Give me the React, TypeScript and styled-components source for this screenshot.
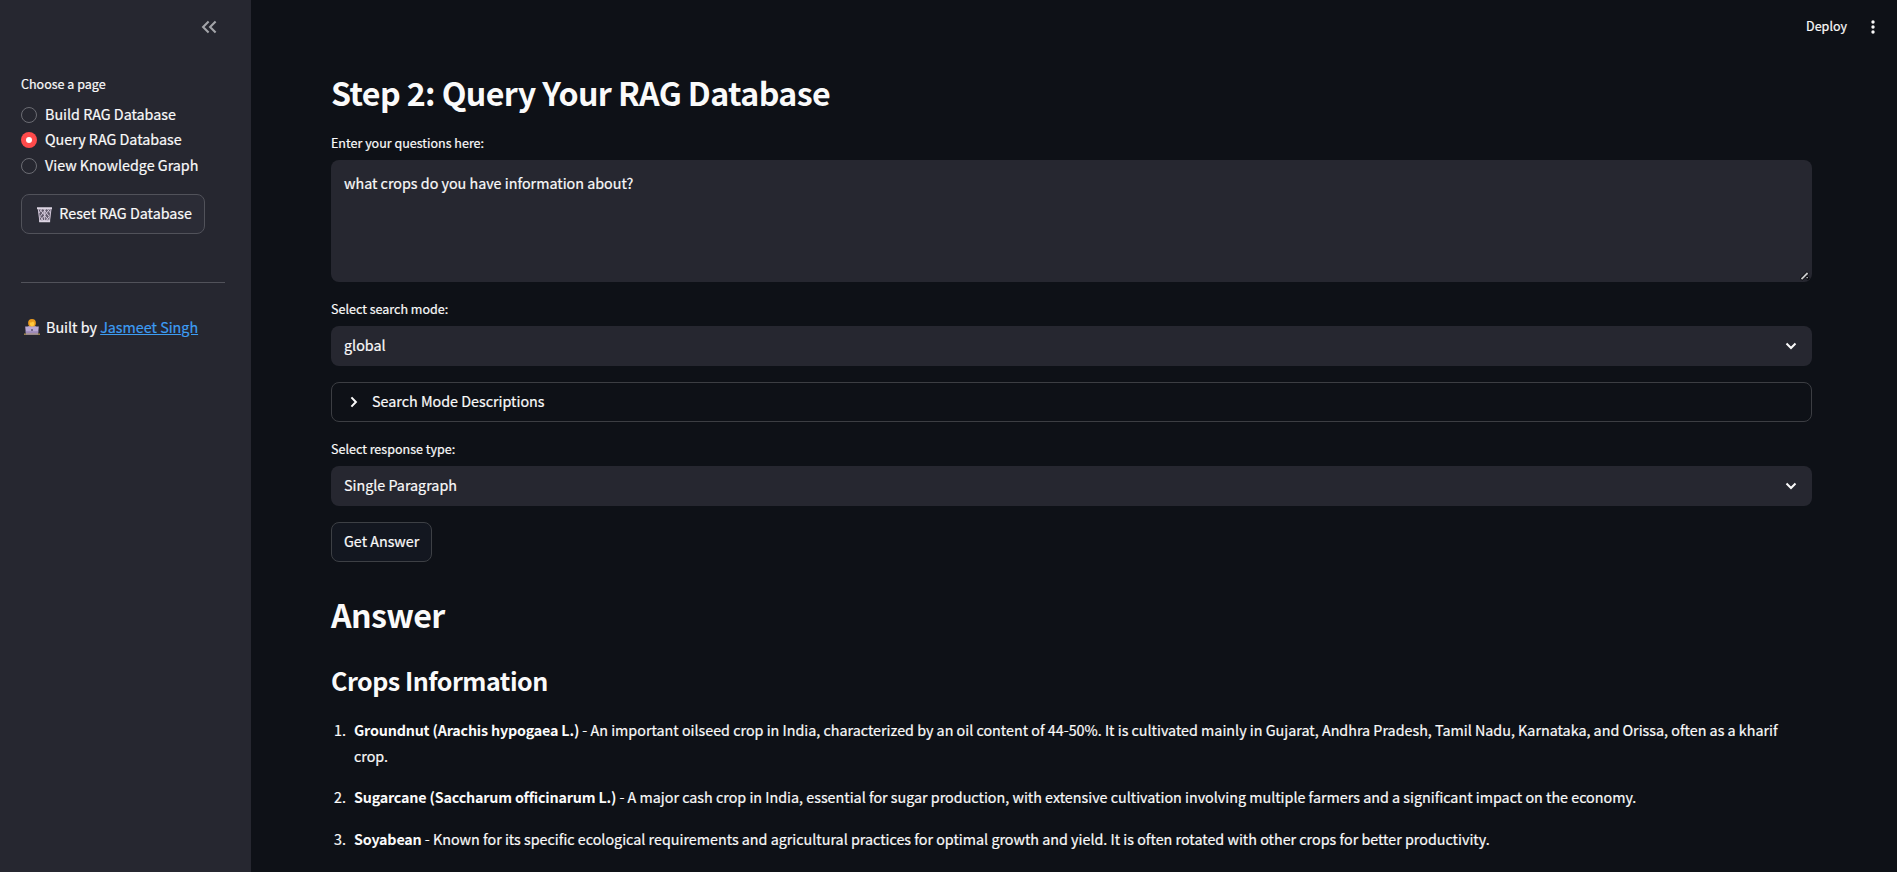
import React from "react";
import styled, { createGlobalStyle, css } from "styled-components";

const GlobalStyle = createGlobalStyle`
  * { box-sizing: border-box; }
  body {
    margin: 0;
    background: #0e1117;
    color: #fafafa;
    font-family: "Noto Sans CJK SC", "Noto Sans", sans-serif;
    font-size: 14.32px;
    line-height: 25.6px;
    -webkit-text-stroke: 0.2px currentColor;
    overflow: hidden;
  }
`;

const field = css`
  width: 100%;
  border: 0;
  border-radius: 8px;
  background: #262730;
`;

const Layout = styled.div`
  display: flex;
  height: 872px;
  overflow: hidden;
`;

const Sidebar = styled.aside`
  flex: 0 0 251px;
  padding: 0 26px 0 21px;
  background: #262730;
`;

const SidebarHeader = styled.div`
  display: flex;
  justify-content: flex-end;
  align-items: center;
  height: 54px;
  padding-right: 6px;
  color: #a3a4a9;
`;

const Label = styled.label<{ $top?: number; $bottom?: number }>`
  display: block;
  height: 20px;
  margin: ${(p) => p.$top ?? 0}px 0 ${(p) => p.$bottom ?? 7}px;
  font-size: 12.53px;
  line-height: 20px;
`;

const Caption = styled.span`
  padding-bottom: 2px;
`;

const RadioRow = styled.div`
  display: flex;
  align-items: center;
  gap: 8px;
  height: 25.5px;
`;

const RadioDot = styled.span<{ $checked?: boolean }>`
  display: flex;
  align-items: center;
  justify-content: center;
  width: 16px;
  height: 16px;
  border-radius: 50%;
  border: ${(p) => (p.$checked ? "0" : "1px solid #6b6c73")};
  background: ${(p) => (p.$checked ? "#ff4b4b" : "transparent")};
  &::after {
    content: "";
    display: ${(p) => (p.$checked ? "block" : "none")};
    width: 6px;
    height: 6px;
    border-radius: 50%;
    background: #fff;
  }
`;

const Button = styled.button<{ $raised?: boolean }>`
  display: flex;
  align-items: center;
  height: 40px;
  padding: 0 12px;
  border: 1px solid ${(p) => (p.$raised ? "#51525a" : "#3d4045")};
  border-radius: 8px;
  background: ${(p) => (p.$raised ? "#2b2c36" : "#131720")};
  color: inherit;
  font: inherit;
  white-space: nowrap;
`;

const ResetButton = styled(Button)`
  width: 184px;
  margin-top: 15.5px;
  padding-left: 15px;
  gap: 7px;
`;

const Divider = styled.hr`
  height: 1px;
  margin: 48px 0 31px;
  border: 0;
  background: #51525a;
`;

const Credit = styled.p`
  display: flex;
  align-items: center;
  gap: 6px;
  margin: 0;
  padding-left: 3px;
`;

const Link = styled.a`
  color: #3d9df3;
  text-decoration: underline;
`;

const Main = styled.main`
  flex: 1;
  min-width: 0;
`;

const Toolbar = styled.header`
  display: flex;
  justify-content: flex-end;
  align-items: center;
  gap: 22px;
  height: 54px;
  padding-right: 20px;
  font-size: 12.53px;
`;

const Content = styled.div`
  width: 1481px;
  margin-left: 80px;
  padding-top: 16px;
`;

const Title = styled.h2`
  margin: 0;
  font-size: 32.2px;
  line-height: 44px;
  font-weight: 700;
  letter-spacing: -0.61px;
  -webkit-text-stroke: 0;
`;

const AnswerTitle = styled(Title)`
  margin-top: 30px;
`;

const Subtitle = styled.h3`
  margin: 27px 0 0;
  font-size: 25.06px;
  line-height: 34px;
  font-weight: 700;
  letter-spacing: -0.49px;
  -webkit-text-stroke: 0;
`;

const TextBoxFrame = styled.div`
  position: relative;
`;

const TextBox = styled.textarea`
  ${field}
  display: block;
  height: 122px;
  padding: 11px 13px;
  color: inherit;
  font: inherit;
  line-height: 24px;
  resize: none;
  outline: none;
`;

const ResizeHandle = styled.svg`
  position: absolute;
  right: 2px;
  bottom: 1px;
`;

const Select = styled.div`
  ${field}
  display: flex;
  align-items: center;
  justify-content: space-between;
  height: 40px;
  padding: 0 15px 0 13px;
`;

const Expander = styled.div`
  display: flex;
  align-items: center;
  gap: 12px;
  height: 40px;
  margin-top: 16px;
  padding-left: 16px;
  border: 1px solid #3c3e43;
  border-radius: 8px;
`;

const AnswerButton = styled(Button)`
  margin-top: 16px;
  width: 101px;
`;

const CropList = styled.ol`
  margin: 20px 0 0;
  padding: 0;
  list-style: none;
`;

const CropItem = styled.li`
  display: flex;
  gap: 8px;
  margin-bottom: 16px;
`;

const CropNumber = styled.span`
  flex: 0 0 15px;
  text-align: right;
`;

const CropText = styled.div`
  width: 1440px;
`;

const Strong = styled.strong`
  font-weight: 700;
  letter-spacing: -0.19px;
  -webkit-text-stroke: 0;
`;

const CollapseIcon = () => (
  <svg width="20" height="20" viewBox="0 0 20 20" fill="none" stroke="currentColor" strokeWidth="2.1">
    <path d="M9.600 4.500 4.100 10l5.500 5.500M16.600 4.500 11.100 10l5.500 5.500" />
  </svg>
);

const ChevronDown = () => (
  <svg width="12" height="8" viewBox="0 0 12 8" fill="none" stroke="#fafafa" strokeWidth="2">
    <path d="M1.500 1.500 6 6l4.500-4.500" />
  </svg>
);

const ChevronRight = () => (
  <svg width="12" height="12" viewBox="0 0 12 12" fill="none" stroke="#fafafa" strokeWidth="2">
    <path d="M3.400 1.400 7.900 6l-4.500 4.600" />
  </svg>
);

const MoreIcon = () => (
  <svg width="8" height="14" viewBox="0 0 8 14" fill="#fafafa">
    <circle cx="4" cy="2" r="1.7" />
    <circle cx="4" cy="7" r="1.7" />
    <circle cx="4" cy="12" r="1.7" />
  </svg>
);

const TrashIcon = () => (
  <svg width="16" height="17" viewBox="0 0 16 17">
    <path d="M1 2h14l-1.600 14H2.600z" fill="#615a6c" />
    <path
      d="m1.400 3 1.600 13M14.600 3 13 16M3 3l9.500 12M7 3l6 8M11 3l3 4M13 3 3.500 15M9 3 3 11M5 3 2 7M8 3v13M12.500 11 8.500 16M3.500 11l4 5"
      fill="none"
      stroke="#d5cbdd"
      strokeWidth="1"
    />
    <path d="M0 .8h16v2.100H0zM2.300 14.600h11.400v2H2.300z" fill="#ddd5e3" />
  </svg>
);

const TechnologistIcon = () => (
  <svg width="16" height="16" viewBox="0 0 16 16">
    <path d="M3 10c0-2.600 1.600-3.600 5-3.600s5 1 5 3.600z" fill="#8f8a9c" />
    <circle cx="8" cy="4" r="3.900" fill="#e99a1c" />
    <path d="M5.700 3.600C7.400 3.600 8.600 3 9.200 2.200c.2.900.6 1.300 1.200 1.500 0 2.200-.9 3.700-2.400 3.700S5.600 5.600 5.700 3.600z" fill="#ffc83d" />
    <path d="M1.200 7.600h13.600l-.7 7.200H1.900z" fill="#b9a8d3" />
    <path d="M1.700 12.300h12.600l-.3 2.700H2z" fill="#9c89b8" />
    <circle cx="8" cy="11" r="1" fill="#5d5270" />
    <path d="M0 14.600h16v1.100H0z" fill="#c9a75a" />
    <path d="M2 14.600h12v1.100H2z" fill="#998da6" />
  </svg>
);

const pages = ["Build RAG Database", "Query RAG Database", "View Knowledge Graph"];

const crops = [
  {
    name: "Groundnut (Arachis hypogaea L.)",
    text: "An important oilseed crop in India, characterized by an oil content of 44-50%. It is cultivated mainly in Gujarat, Andhra Pradesh, Tamil Nadu, Karnataka, and Orissa, often as a kharif crop.",
  },
  {
    name: "Sugarcane (Saccharum officinarum L.)",
    text: "A major cash crop in India, essential for sugar production, with extensive cultivation involving multiple farmers and a significant impact on the economy.",
  },
  {
    name: "Soyabean",
    text: "Known for its specific ecological requirements and agricultural practices for optimal growth and yield. It is often rotated with other crops for better productivity.",
  },
];

export default function App() {
  return (
    <Layout>
      <GlobalStyle />
      <Sidebar>
        <SidebarHeader>
          <CollapseIcon />
        </SidebarHeader>
        <Label $top={20} $bottom={8}>
          Choose a page
        </Label>
        {pages.map((page, i) => (
          <RadioRow key={page}>
            <RadioDot $checked={i === 1} />
            <Caption>{page}</Caption>
          </RadioRow>
        ))}
        <ResetButton $raised>
          <TrashIcon />
          <Caption>Reset RAG Database</Caption>
        </ResetButton>
        <Divider />
        <Credit>
          <TechnologistIcon />
          <span>
            Built by <Link>Jasmeet Singh</Link>
          </span>
        </Credit>
      </Sidebar>
      <Main>
        <Toolbar>
          <Caption>Deploy</Caption>
          <MoreIcon />
        </Toolbar>
        <Content>
          <Title>Step 2: Query Your RAG Database</Title>
          <Label $top={19}>Enter your questions here:</Label>
          <TextBoxFrame>
            <TextBox defaultValue="what crops do you have information about?" />
            <ResizeHandle width="10" height="11" viewBox="0 0 10 11" fill="none">
              <path d="M1 9.500 8 2.500M6.500 9 8.500 7" stroke="#0b0c10" strokeWidth="3.600" />
              <path d="M1.500 9.200 7.600 3" stroke="#c9c9cb" strokeWidth="1.800" />
              <path d="M6.500 7.600h1.300" stroke="#c9c9cb" strokeWidth="1.300" />
            </ResizeHandle>
          </TextBoxFrame>
          <Label $top={17}>Select search mode:</Label>
          <Select>
            <Caption>global</Caption>
            <ChevronDown />
          </Select>
          <Expander>
            <ChevronRight />
            <Caption>Search Mode Descriptions</Caption>
          </Expander>
          <Label $top={17}>Select response type:</Label>
          <Select>
            <Caption>Single Paragraph</Caption>
            <ChevronDown />
          </Select>
          <AnswerButton>
            <Caption>Get Answer</Caption>
          </AnswerButton>
          <AnswerTitle>Answer</AnswerTitle>
          <Subtitle>Crops Information</Subtitle>
          <CropList>
            {crops.map((crop, i) => (
              <CropItem key={crop.name}>
                <CropNumber>{i + 1}.</CropNumber>
                <CropText>
                  <Strong>{crop.name}</Strong> - {crop.text}
                </CropText>
              </CropItem>
            ))}
          </CropList>
        </Content>
      </Main>
    </Layout>
  );
}
